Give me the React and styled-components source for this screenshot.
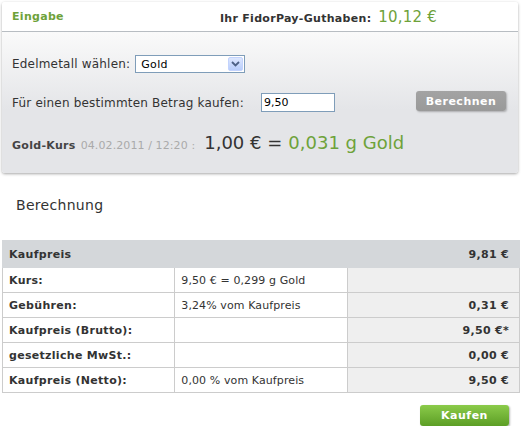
import React from "react";
import styled, { createGlobalStyle } from "styled-components";

const GlobalStyle = createGlobalStyle`
  body {
    margin: 0;
    background: #ffffff;
    font-family: "DejaVu Sans", Verdana, sans-serif;
    color: #333333;
    letter-spacing: 0.3px;
  }
`;

const rows = [
  { label: "Kurs:", note: "9,50 € = 0,299 g Gold", value: "" },
  { label: "Gebühren:", note: "3,24% vom Kaufpreis", value: "0,31 €" },
  { label: "Kaufpreis (Brutto):", note: "", value: "9,50 €*" },
  { label: "gesetzliche MwSt.:", note: "", value: "0,00 €" },
  { label: "Kaufpreis (Netto):", note: "0,00 % vom Kaufpreis", value: "9,50 €" },
];

const App = () => {
  return (
    <Page>
      <GlobalStyle />
      <Panel>
        <PanelHeader>
          <PanelTitle>Eingabe</PanelTitle>
          <Balance>
            <BalanceLabel>Ihr FidorPay-Guthaben:</BalanceLabel>
            <BalanceValue>10,12 €</BalanceValue>
          </Balance>
        </PanelHeader>
        <PanelBody>
          <FormRow>
            <FieldLabel>Edelmetall wählen:</FieldLabel>
            <SelectBox>
              <span>Gold</span>
              <SelectArrow>
                <svg width="9" height="6" viewBox="0 0 9 6">
                  <path d="M1 1 L4.5 4.5 L8 1" fill="none" stroke="#4d6185" strokeWidth="1.8" />
                </svg>
              </SelectArrow>
            </SelectBox>
          </FormRow>
          <FormRow $top={20}>
            <FieldLabel>Für einen bestimmten Betrag kaufen:</FieldLabel>
            <AmountInput defaultValue="9,50" />
            <GrayButton>Berechnen</GrayButton>
          </FormRow>
          <RateRow>
            <RateLabel>Gold-Kurs</RateLabel>
            <RateDate>04.02.2011 / 12:20 :</RateDate>
            <RateBig>1,00 € =</RateBig>
            <RateBig $green>0,031 g Gold</RateBig>
          </RateRow>
        </PanelBody>
      </Panel>

      <SectionTitle>Berechnung</SectionTitle>

      <CalcTable>
        <tbody>
          <tr>
            <HeadCell colSpan={2}>Kaufpreis</HeadCell>
            <HeadCell $right>9,81 €</HeadCell>
          </tr>
          {rows.map((r) => (
            <tr key={r.label}>
              <LabelCell>{r.label}</LabelCell>
              <NoteCell>{r.note}</NoteCell>
              <ValueCell>{r.value}</ValueCell>
            </tr>
          ))}
        </tbody>
      </CalcTable>

      <Footer>
        <GreenButton>Kaufen</GreenButton>
      </Footer>
    </Page>
  );
};

export default App;

const Page = styled.div`
  width: 522px;
  padding: 2px 0 0 2px;
  box-sizing: border-box;
`;

const Panel = styled.section`
  width: 516px;
  border-radius: 3px;
  box-shadow: 0 1px 3px rgba(0, 0, 0, 0.35);
  overflow: hidden;
`;

const PanelHeader = styled.div`
  height: 29px;
  display: flex;
  align-items: center;
  padding: 0 10px;
  background: #ffffff;
  border-bottom: 1px solid #b8bdc2;
`;

const PanelTitle = styled.h2`
  margin: 0;
  font-size: 11px;
  font-weight: bold;
  color: #6ea23a;
`;

const Balance = styled.div`
  margin-left: auto;
  margin-right: 71px;
  display: flex;
  align-items: baseline;
  gap: 7px;
`;

const BalanceLabel = styled.span`
  font-size: 11px;
  font-weight: bold;
  color: #333333;
`;

const BalanceValue = styled.span`
  font-size: 15px;
  letter-spacing: 0.2px;
  color: #6ea23a;
`;

const PanelBody = styled.div`
  height: 141px;
  box-sizing: border-box;
  padding: 23px 10px 0;
  background: linear-gradient(#fafafa, #e4e5e8 55%, #e4e5e8);
`;

const FormRow = styled.div`
  display: flex;
  align-items: center;
  margin-top: ${(p) => (p.$top ? `${p.$top}px` : "0")};
`;

const FieldLabel = styled.label`
  font-size: 12px;
  letter-spacing: 0.2px;
  color: #333333;
  margin-right: 5px;
`;

const SelectBox = styled.div`
  width: 110px;
  height: 18px;
  box-sizing: border-box;
  border: 1px solid #7f9db9;
  background: #ffffff;
  display: flex;
  align-items: center;
  justify-content: space-between;
  padding: 0 1px 0 5px;
  font-size: 11px;
  color: #000000;
  font-family: "DejaVu Sans", Verdana, sans-serif;
`;

const SelectArrow = styled.span`
  width: 15px;
  height: 14px;
  box-sizing: border-box;
  border: 1px solid #c3d3fd;
  border-radius: 2px;
  background: linear-gradient(#dde7fe, #b8cdfb);
  display: flex;
  align-items: center;
  justify-content: center;
`;

const AmountInput = styled.input`
  width: 74px;
  height: 19px;
  box-sizing: border-box;
  margin-left: 12px;
  border: 1px solid #7f9db9;
  padding: 1px 2px;
  font-family: "DejaVu Sans", Verdana, sans-serif;
  font-size: 11px;
  color: #000000;
  outline: none;
`;

const GrayButton = styled.button`
  margin-left: auto;
  margin-right: 2px;
  margin-top: -3px;
  width: 90px;
  height: 20px;
  border: none;
  border-radius: 3px;
  background: linear-gradient(#a3a3a3, #999999);
  box-shadow: 1px 1px 2px rgba(0, 0, 0, 0.25);
  color: #ffffff;
  font-family: "DejaVu Sans", Verdana, sans-serif;
  font-size: 11px;
  font-weight: bold;
  letter-spacing: 0.5px;
  padding: 0;
`;

const RateRow = styled.div`
  display: flex;
  align-items: baseline;
  margin-top: 20px;
`;

const RateLabel = styled.span`
  font-size: 11px;
  font-weight: bold;
  color: #444444;
  margin-right: 5px;
`;

const RateDate = styled.span`
  font-size: 11px;
  letter-spacing: 0.1px;
  color: #aaaaaa;
  margin-right: 9px;
`;

const RateBig = styled.span`
  font-size: 18px;
  letter-spacing: 0;
  color: ${(p) => (p.$green ? "#6ea23a" : "#333333")};
  margin-right: 6px;
`;

const SectionTitle = styled.h3`
  margin: 24px 0 0 14px;
  font-size: 14px;
  font-weight: normal;
  color: #333333;
`;

const CalcTable = styled.table`
  margin-top: 27px;
  width: 518px;
  border-collapse: collapse;
  table-layout: fixed;
  font-size: 11px;
  color: #333333;
`;

const HeadCell = styled.td`
  height: 26px;
  background: #d4d7da;
  font-weight: bold;
  padding: 0 ${(p) => (p.$right ? "10px" : "6px")} 0 6px;
  text-align: ${(p) => (p.$right ? "right" : "left")};
  border: 1px solid #d4d7da;
`;

const LabelCell = styled.td`
  width: 160px;
  height: 24px;
  padding: 0 6px;
  font-weight: bold;
  border: 1px solid #cccccc;
`;

const NoteCell = styled.td`
  width: 160px;
  padding: 0 6px;
  font-size: 11px;
  letter-spacing: 0.1px;
  color: #333333;
  border: 1px solid #cccccc;
`;

const ValueCell = styled.td`
  padding: 0 10px;
  text-align: right;
  font-weight: bold;
  background: #efefef;
  border: 1px solid #cccccc;
`;

const Footer = styled.div`
  display: flex;
  justify-content: flex-end;
  padding: 12px 13px 0 0;
`;

const GreenButton = styled.button`
  width: 89px;
  height: 21px;
  border: none;
  border-radius: 3px;
  background: linear-gradient(#8bcb4a, #5c9e25);
  box-shadow: 1px 1px 2px rgba(0, 0, 0, 0.3);
  color: #ffffff;
  font-family: "DejaVu Sans", Verdana, sans-serif;
  font-size: 11px;
  font-weight: bold;
  letter-spacing: 0.5px;
  padding: 0;
`;
